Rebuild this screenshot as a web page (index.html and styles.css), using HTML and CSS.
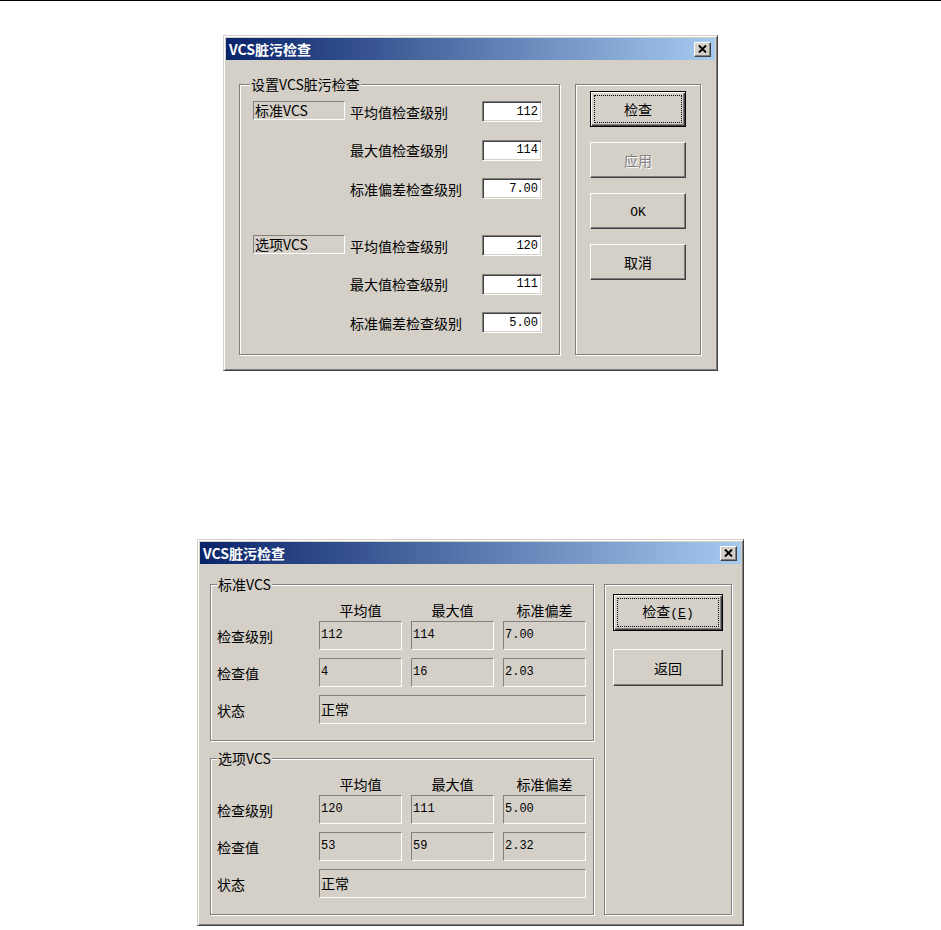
FILE: index.html
```html
<!DOCTYPE html>
<html>
<head>
  <meta charset="utf-8">
  <title>VCS脏污检查</title>
  <link rel="stylesheet" href="styles.css">
</head>
<body>
  <div class="page">

    <div class="dialog dialog-set">
      <div class="titlebar">
        <span class="title">VCS脏污检查</span>
        <span class="close">
          <svg width="9" height="8" viewBox="0 0 9 8"><path d="M1 0.5 L8 7.5 M8 0.5 L1 7.5" stroke="#000" stroke-width="1.9" fill="none"/></svg>
        </span>
      </div>
      <div class="dialog-body">
        <fieldset class="group group-levels">
          <legend>设置VCS脏污检查</legend>
          <div class="level-set">
            <div class="tag">标准VCS</div>
            <label>平均值检查级别</label>
            <input class="field" type="text" value="112">
            <label>最大值检查级别</label>
            <input class="field" type="text" value="114">
            <label>标准偏差检查级别</label>
            <input class="field" type="text" value="7.00">
          </div>
          <div class="level-set">
            <div class="tag">选项VCS</div>
            <label>平均值检查级别</label>
            <input class="field" type="text" value="120">
            <label>最大值检查级别</label>
            <input class="field" type="text" value="111">
            <label>标准偏差检查级别</label>
            <input class="field" type="text" value="5.00">
          </div>
        </fieldset>
        <fieldset class="group group-buttons">
          <button class="btn default">检查</button>
          <button class="btn" disabled>应用</button>
          <button class="btn"><span class="latin">OK</span></button>
          <button class="btn">取消</button>
        </fieldset>
      </div>
    </div>

    <div class="dialog dialog-result">
      <div class="titlebar">
        <span class="title">VCS脏污检查</span>
        <span class="close">
          <svg width="9" height="8" viewBox="0 0 9 8"><path d="M1 0.5 L8 7.5 M8 0.5 L1 7.5" stroke="#000" stroke-width="1.9" fill="none"/></svg>
        </span>
      </div>
      <div class="dialog-body">
        <div class="result-col">
          <fieldset class="group group-result">
            <legend>标准VCS</legend>
            <div class="stats">
              <div></div>
              <div class="head">平均值</div>
              <div class="head">最大值</div>
              <div class="head">标准偏差</div>

              <div>检查级别</div>
              <div class="value">112</div>
              <div class="value">114</div>
              <div class="value">7.00</div>

              <div>检查值</div>
              <div class="value">4</div>
              <div class="value">16</div>
              <div class="value">2.03</div>

              <div>状态</div>
              <div class="value state">正常</div>
            </div>
          </fieldset>
          <fieldset class="group group-result">
            <legend>选项VCS</legend>
            <div class="stats">
              <div></div>
              <div class="head">平均值</div>
              <div class="head">最大值</div>
              <div class="head">标准偏差</div>

              <div>检查级别</div>
              <div class="value">120</div>
              <div class="value">111</div>
              <div class="value">5.00</div>

              <div>检查值</div>
              <div class="value">53</div>
              <div class="value">59</div>
              <div class="value">2.32</div>

              <div>状态</div>
              <div class="value state">正常</div>
            </div>
          </fieldset>
        </div>
        <fieldset class="group group-buttons">
          <button class="btn default">检查<span class="latin">(<u>E</u>)</span></button>
          <button class="btn">返回</button>
        </fieldset>
      </div>
    </div>

  </div>
</body>
</html>
```

FILE: styles.css
```css
body {
  margin: 0;
  background-color: #fff;
  font-family: "Noto Sans CJK SC", sans-serif;
  font-size: 14px;
  color: #000;
}

.page {
  border-top: 1px solid #000;
  padding-top: 34px;
}

/* window frame */
.dialog {
  box-sizing: border-box;
  margin: 0 auto;
  padding: 2px;
  background-color: #d4d0c8;
  border: 1px solid;
  border-color: #d4d0c8 #404040 #404040 #d4d0c8;
  box-shadow: inset 1px 1px #fff, inset -1px -1px #808080;
}

.dialog-set {
  width: 495px;
  height: 336px;
}

.dialog-result {
  width: 547px;
  height: 387px;
  margin-top: 168px;
}

.titlebar {
  display: flex;
  align-items: center;
  justify-content: space-between;
  height: 22px;
  padding: 0 4px 0 3px;
  background: linear-gradient(to right, #0a246a, #a6caf0);
}

.title {
  color: #fff;
  font-weight: bold;
  line-height: 16px;
}

.close {
  display: flex;
  align-items: center;
  justify-content: center;
  box-sizing: border-box;
  width: 17px;
  height: 15px;
  background-color: #d4d0c8;
  border: 1px solid;
  border-color: #fff #404040 #404040 #fff;
  box-shadow: inset -1px -1px #808080;
}

.dialog-body {
  display: flex;
  box-sizing: border-box;
  height: calc(100% - 22px);
}

.dialog-set .dialog-body {
  padding: 16px 14px 13px 13px;
  gap: 15px;
}

.dialog-result .dialog-body {
  padding: 12px 9px 8px 10px;
  gap: 10px;
}

/* etched group box */
.group {
  box-sizing: border-box;
  min-width: 0;
  margin: 0;
  border: 1px solid #808080;
  box-shadow: inset 1px 1px #fff, 1px 1px #fff;
}

.group legend {
  padding: 0 1px;
  background-color: #d4d0c8;
  line-height: 16px;
}

.group-levels {
  width: 321px;
  padding: 9px 16px 0 13px;
}

.group-levels legend {
  margin-left: -3px;
}

.group-buttons {
  display: flex;
  flex-direction: column;
  margin-top: 8px;
}

.dialog-set .group-buttons {
  width: 126px;
  padding: 6px 14px 0 14px;
  gap: 15px;
}

.dialog-result .group-buttons {
  width: 128px;
  padding: 9px 8px 0 8px;
  gap: 18px;
}

/* level settings */
.level-set {
  display: grid;
  grid-template-columns: 92px 127px 60px;
  grid-auto-rows: 21px;
  column-gap: 5px;
  row-gap: 17.5px;
  align-items: center;
}

.level-set + .level-set {
  margin-top: 36px;
}

.level-set label {
  grid-column: 2;
  line-height: 16px;
}

.tag {
  align-self: start;
  box-sizing: border-box;
  height: 19px;
  padding: 0 1px;
  line-height: 17px;
  border: 1px solid;
  border-color: #808080 #fff #fff #808080;
}

.field {
  box-sizing: border-box;
  width: 60px;
  height: 21px;
  margin: 0;
  padding: 0 3px 0 0;
  text-align: right;
  font-family: "Liberation Mono", monospace;
  font-size: 12px;
  color: #000;
  background-color: #fff;
  border: 1px solid;
  border-color: #808080 #fff #fff #808080;
  box-shadow: inset 1px 1px #404040, inset -1px -1px #d4d0c8;
  outline: none;
}

/* results */
.result-col {
  display: flex;
  flex-direction: column;
  width: 384px;
  gap: 9px;
}

.group-result {
  flex: 1;
  padding: 10px 7px 0 6px;
}

.stats {
  display: grid;
  grid-template-columns: 93px 83px 83px 83px;
  grid-template-rows: 11px;
  grid-auto-rows: 29px;
  column-gap: 9px;
  row-gap: 8px;
  align-items: center;
}

.stats .head {
  align-self: start;
  height: 16px;
  margin-bottom: -5px;
  line-height: 16px;
  text-align: center;
}

.value {
  box-sizing: border-box;
  height: 29px;
  padding-left: 1px;
  line-height: 27px;
  font-family: "Liberation Mono", monospace;
  font-size: 12px;
  border: 1px solid;
  border-color: #808080 #fff #fff #808080;
}

.value.state {
  grid-column: 2 / 5;
  font-family: "Noto Sans CJK SC", sans-serif;
  font-size: 14px;
}

/* push buttons */
.btn {
  display: block;
  box-sizing: border-box;
  margin: 0;
  padding: 0;
  font: inherit;
  line-height: 16px;
  color: #000;
  background-color: #d4d0c8;
  border: 1px solid;
  border-color: #fff #404040 #404040 #fff;
  box-shadow: inset -1px -1px #808080;
}

.btn.default {
  border-color: #000;
  box-shadow: inset 1px 1px #fff, inset -1px -1px #404040, inset -2px -2px #808080;
  outline: 1px dotted #000;
  outline-offset: -5px;
}

.btn:disabled {
  color: #808080;
  text-shadow: 1px 1px #fff;
}

.dialog-set .btn {
  width: 96px;
  height: 36px;
}

.dialog-result .btn {
  width: 110px;
  height: 37px;
}

.latin {
  font-family: "Liberation Mono", monospace;
  font-size: 13px;
}
```
